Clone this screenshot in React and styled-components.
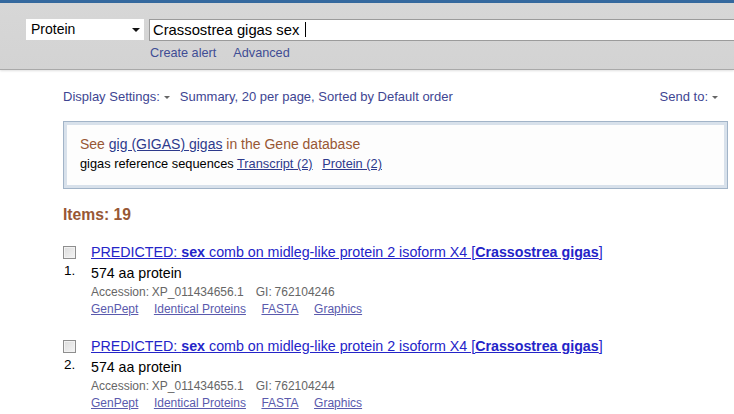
import styled, { createGlobalStyle } from 'styled-components';

const GlobalStyle = createGlobalStyle`
  body {
    margin: 0;
    background: #fff;
    font-family: "Liberation Sans", Arial, sans-serif;
    overflow: hidden;
  }
`;

const TopBar = styled.div`
  height: 3px;
  background: #35699f;
`;

const SearchBar = styled.div`
  box-sizing: border-box;
  height: 67px;
  padding: 16px 0 0 26px;
  background: linear-gradient(#d7d7d7, #d3d3d3);
  border-bottom: 1px solid #a9a9a9;
  box-shadow: 0 1px 2px rgba(0, 0, 0, 0.12);
  overflow: hidden;
`;

const SearchRow = styled.div`
  display: flex;
  gap: 5px;
`;

const DbSelect = styled.div`
  position: relative;
  box-sizing: border-box;
  flex: none;
  width: 118px;
  height: 21px;
  padding-left: 5px;
  background: #fff;
  font-size: 14px;
  line-height: 21px;
  color: #000;
`;

const Caret = styled.span`
  position: absolute;
  right: 4px;
  top: 9px;
  border-left: 4px solid transparent;
  border-right: 4px solid transparent;
  border-top: 4px solid #111;
`;

const TermInput = styled.div`
  box-sizing: border-box;
  flex: none;
  width: 640px;
  height: 22px;
  padding-left: 3px;
  background: #fff;
  border: 1px solid #9b9b9b;
  border-right: none;
  font-size: 14.8px;
  line-height: 20px;
  color: #000;
`;

const Cursor = styled.span`
  display: inline-block;
  width: 1px;
  height: 15px;
  margin-left: 1px;
  vertical-align: -2px;
  background: #000;
`;

const ToolLinks = styled.div`
  display: flex;
  gap: 17px;
  margin: 5px 0 0 124px;
  font-size: 12.7px;
  line-height: 15px;
  color: #3f4d95;
`;

const Main = styled.div`
  padding: 0 6px 0 63px;
`;

const DisplayBar = styled.div`
  display: flex;
  justify-content: space-between;
  align-items: center;
  margin-top: 19px;
  padding-right: 10px;
  font-size: 13px;
  line-height: 15px;
  color: #3e4592;
`;

const Left = styled.div`
  display: flex;
  align-items: center;
`;

const Drop = styled.span`
  display: inline-block;
  margin: 1px ${(p) => p.$after || 0}px 0 4px;
  border-left: 3px solid transparent;
  border-right: 3px solid transparent;
  border-top: 3px solid #666;
`;

const GeneBox = styled.div`
  box-sizing: border-box;
  height: 68px;
  margin-top: 17px;
  padding: 12px 16px 0;
  background: #fdfdfd;
  border: 1px solid #a2b4c8;
  box-shadow: inset 0 0 0 3px #d8e1eb;
`;

const GeneLine = styled.div`
  font-size: 14px;
  line-height: 20px;
  color: #985735;
`;

const RefLine = styled.div`
  font-size: 12.8px;
  line-height: 20px;
  color: #000;
`;

const BoxLink = styled.a`
  color: #2e3a8c;
  text-decoration: underline;
  margin-right: ${(p) => p.$gap || 0}px;
`;

const ItemsCount = styled.div`
  margin-top: 16px;
  font-size: 15.7px;
  font-weight: bold;
  line-height: 20px;
  color: #985735;
`;

const List = styled.div`
  display: flex;
  flex-direction: column;
  gap: 20px;
  margin-top: 18px;
`;

const Item = styled.div`
  display: grid;
  grid-template-columns: 28px 1fr;
`;

const Side = styled.div`
  display: flex;
  flex-direction: column;
`;

const Check = styled.span`
  box-sizing: border-box;
  width: 13px;
  height: 13px;
  margin-top: 3px;
  border: 1px solid #8e8e8e;
  background: linear-gradient(135deg, #dcdcdc, #f4f4f4);
  box-shadow: inset 0 0 0 1px #f2f2f2;
`;

const Num = styled.span`
  margin: 4px 0 0 1px;
  font-size: 13.5px;
  line-height: 16px;
  color: #000;
`;

const Title = styled.a`
  font-size: 14.25px;
  line-height: 18px;
  color: #2424c8;
  text-decoration: underline;
  white-space: nowrap;

  b {
    font-weight: bold;
  }
`;

const Desc = styled.div`
  margin-top: 3px;
  font-size: 14.2px;
  line-height: 18px;
  color: #000;
`;

const Meta = styled.div`
  margin-top: 3px;
  font-size: 12px;
  line-height: 15px;
  color: #666;
  word-spacing: -0.5px;

  span + span {
    margin-left: 12px;
  }
`;

const Links = styled.div`
  display: flex;
  gap: 15.5px;
  margin-top: 2px;
  font-size: 12px;
  line-height: 15px;
`;

const SmallLink = styled.a`
  color: #5a5aad;
  text-decoration: underline;
`;

const items = [
  { n: 1, acc: 'XP_011434656.1', gi: '762104246' },
  { n: 2, acc: 'XP_011434655.1', gi: '762104244' },
];

export default function App() {
  return (
    <>
      <GlobalStyle />
      <TopBar />
      <SearchBar>
        <SearchRow>
          <DbSelect>
            Protein
            <Caret />
          </DbSelect>
          <TermInput>
            Crassostrea gigas sex <Cursor />
          </TermInput>
        </SearchRow>
        <ToolLinks>
          <span>Create alert</span>
          <span>Advanced</span>
        </ToolLinks>
      </SearchBar>
      <Main>
        <DisplayBar>
          <Left>
            Display Settings:
            <Drop $after={10} />
            Summary, 20 per page, Sorted by Default order
          </Left>
          <Left>
            Send to:
            <Drop />
          </Left>
        </DisplayBar>
        <GeneBox>
          <GeneLine>
            See <BoxLink>gig (GIGAS) gigas</BoxLink> in the Gene database
          </GeneLine>
          <RefLine>
            gigas reference sequences <BoxLink $gap={6}>Transcript (2)</BoxLink>{' '}
            <BoxLink>Protein (2)</BoxLink>
          </RefLine>
        </GeneBox>
        <ItemsCount>Items: 19</ItemsCount>
        <List>
          {items.map((it) => (
            <Item key={it.n}>
              <Side>
                <Check />
                <Num>{it.n}.</Num>
              </Side>
              <div>
                <Title>
                  PREDICTED: <b>sex</b> comb on midleg-like protein 2 isoform X4 [
                  <b>Crassostrea gigas</b>]
                </Title>
                <Desc>574 aa protein</Desc>
                <Meta>
                  <span>Accession: {it.acc}</span>
                  <span>GI: {it.gi}</span>
                </Meta>
                <Links>
                  <SmallLink>GenPept</SmallLink>
                  <SmallLink>Identical Proteins</SmallLink>
                  <SmallLink>FASTA</SmallLink>
                  <SmallLink>Graphics</SmallLink>
                </Links>
              </div>
            </Item>
          ))}
        </List>
      </Main>
    </>
  );
}
